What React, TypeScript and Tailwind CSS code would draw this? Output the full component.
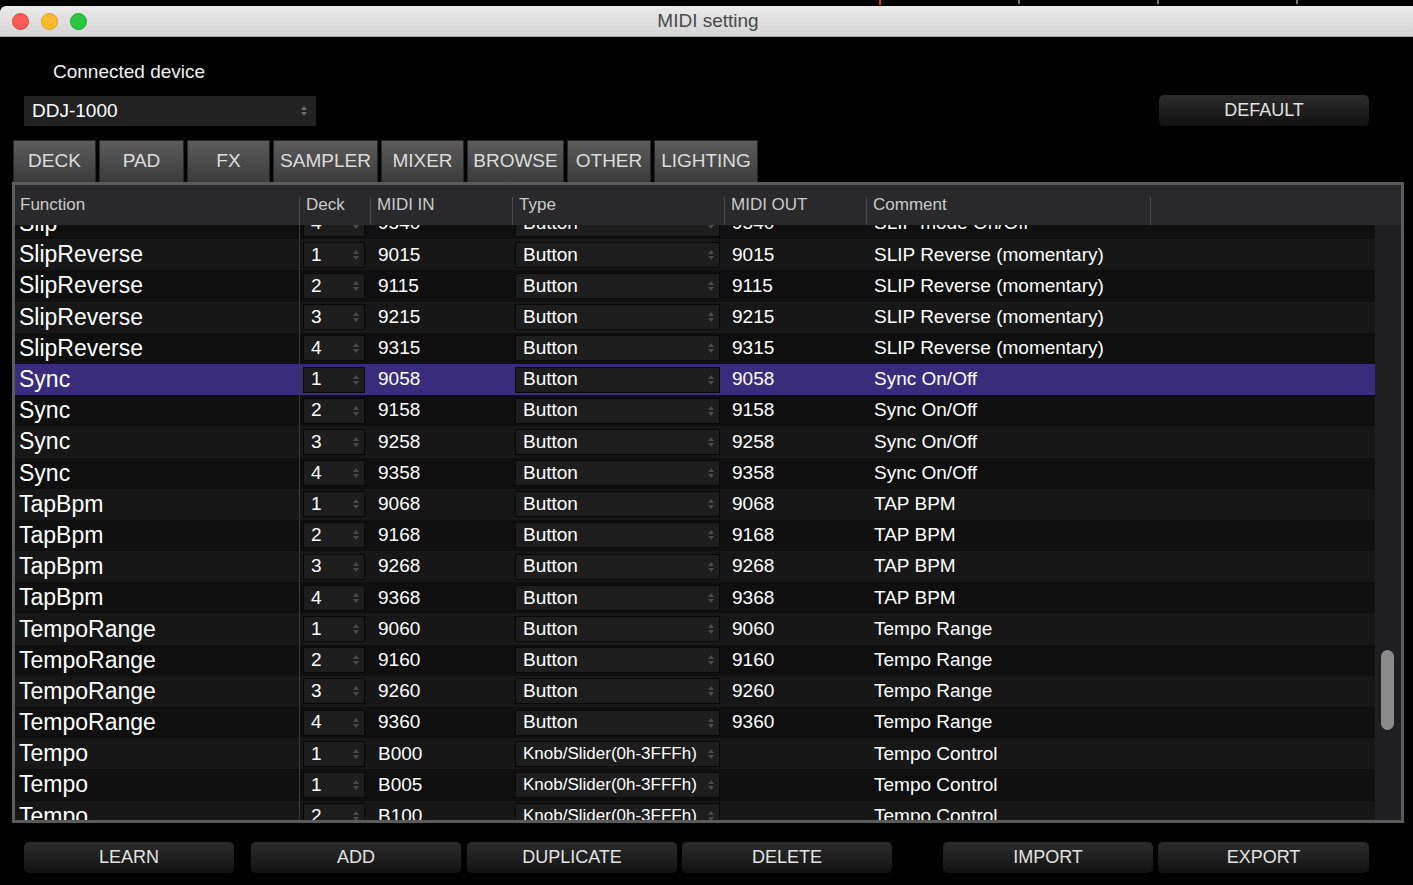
import React from "react";

type Row = {
  fn: string;
  deck: string;
  midiIn: string;
  type: string;
  midiOut: string;
  comment: string;
};

const rows: Row[] = [
  { fn: "Slip", deck: "4", midiIn: "9540", type: "Button", midiOut: "9540", comment: "SLIP mode On/Off" },
  { fn: "SlipReverse", deck: "1", midiIn: "9015", type: "Button", midiOut: "9015", comment: "SLIP Reverse (momentary)" },
  { fn: "SlipReverse", deck: "2", midiIn: "9115", type: "Button", midiOut: "9115", comment: "SLIP Reverse (momentary)" },
  { fn: "SlipReverse", deck: "3", midiIn: "9215", type: "Button", midiOut: "9215", comment: "SLIP Reverse (momentary)" },
  { fn: "SlipReverse", deck: "4", midiIn: "9315", type: "Button", midiOut: "9315", comment: "SLIP Reverse (momentary)" },
  { fn: "Sync", deck: "1", midiIn: "9058", type: "Button", midiOut: "9058", comment: "Sync On/Off" },
  { fn: "Sync", deck: "2", midiIn: "9158", type: "Button", midiOut: "9158", comment: "Sync On/Off" },
  { fn: "Sync", deck: "3", midiIn: "9258", type: "Button", midiOut: "9258", comment: "Sync On/Off" },
  { fn: "Sync", deck: "4", midiIn: "9358", type: "Button", midiOut: "9358", comment: "Sync On/Off" },
  { fn: "TapBpm", deck: "1", midiIn: "9068", type: "Button", midiOut: "9068", comment: "TAP BPM" },
  { fn: "TapBpm", deck: "2", midiIn: "9168", type: "Button", midiOut: "9168", comment: "TAP BPM" },
  { fn: "TapBpm", deck: "3", midiIn: "9268", type: "Button", midiOut: "9268", comment: "TAP BPM" },
  { fn: "TapBpm", deck: "4", midiIn: "9368", type: "Button", midiOut: "9368", comment: "TAP BPM" },
  { fn: "TempoRange", deck: "1", midiIn: "9060", type: "Button", midiOut: "9060", comment: "Tempo Range" },
  { fn: "TempoRange", deck: "2", midiIn: "9160", type: "Button", midiOut: "9160", comment: "Tempo Range" },
  { fn: "TempoRange", deck: "3", midiIn: "9260", type: "Button", midiOut: "9260", comment: "Tempo Range" },
  { fn: "TempoRange", deck: "4", midiIn: "9360", type: "Button", midiOut: "9360", comment: "Tempo Range" },
  { fn: "Tempo", deck: "1", midiIn: "B000", type: "Knob/Slider(0h-3FFFh)", midiOut: "", comment: "Tempo Control" },
  { fn: "Tempo", deck: "1", midiIn: "B005", type: "Knob/Slider(0h-3FFFh)", midiOut: "", comment: "Tempo Control" },
  { fn: "Tempo", deck: "2", midiIn: "B100", type: "Knob/Slider(0h-3FFFh)", midiOut: "", comment: "Tempo Control" },
];

const tabs = [
  { label: "DECK", w: "w-[83px]" },
  { label: "PAD", w: "w-[85px]" },
  { label: "FX", w: "w-[83px]" },
  { label: "SAMPLER", w: "w-[105px]" },
  { label: "MIXER", w: "w-[83px]" },
  { label: "BROWSE", w: "w-[97px]" },
  { label: "OTHER", w: "w-[84px]" },
  { label: "LIGHTING", w: "w-[104px]" },
];

const UpDown = ({ color = "#4a4a4a" }: { color?: string }) => (
  <svg width="8" height="14" viewBox="0 0 8 14">
    <path d="M1 6 L4 2 L7 6 Z" fill={color} />
    <path d="M1 8 L4 12 L7 8 Z" fill={color} />
  </svg>
);

const DarkButton = ({ label, className }: { label: string; className: string }) => (
  <div
    className={`${className} h-[31px] flex items-center justify-center rounded-[5px] bg-gradient-to-b from-[#2c2c2c] to-[#121212] text-[18px] text-[#e2e2e2]`}
  >
    {label}
  </div>
);

const HeaderCell = ({ label, w, sep = true }: { label: string; w: string; sep?: boolean }) => (
  <div className={`${w} h-full flex`}>
    {sep && <div className="w-px h-[28px] self-end bg-[#4c4c4f]" />}
    <span className={`self-center ${sep ? "pl-[6px]" : "pl-[5px]"} -mt-[1px]`}>{label}</span>
  </div>
);

const TableRow = ({ row, idx }: { row: Row; idx: number }) => {
  const selected = row.fn === "Sync" && row.deck === "1";
  const bg = selected ? "bg-[#3a2c7c]" : idx % 2 === 0 ? "bg-[#0f0f0f]" : "bg-[#171717]";
  const knob = row.type !== "Button";
  return (
    <div className={`h-[31.2px] flex items-center text-white ${bg}`}>
      <div className="w-[284px] pl-[4px] text-[23px] leading-none whitespace-nowrap">{row.fn}</div>
      <div className="w-px h-full bg-[#3a3a3a]" />
      <div className="w-[70px] flex">
        <div className="ml-[3px] w-[62px] h-[26px] flex items-center justify-between pl-[7px] pr-[4px] bg-[#1d1d1d] border border-[#080808] text-[19px]">
          <span>{row.deck}</span>
          <UpDown />
        </div>
      </div>
      <div className="w-[142px] pl-[8px] text-[19px]">{row.midiIn}</div>
      <div className="w-[212px] flex">
        <div className="ml-[3px] w-[205px] h-[26px] flex items-center justify-between pl-[7px] pr-[4px] bg-[#1d1d1d] border border-[#080808] whitespace-nowrap">
          <span className={knob ? "text-[17px]" : "text-[19px]"}>{row.type}</span>
          <UpDown />
        </div>
      </div>
      <div className="w-[142px] pl-[8px] text-[19px]">{row.midiOut}</div>
      <div className="flex-1 pl-[8px] text-[19px] whitespace-nowrap">{row.comment}</div>
    </div>
  );
};

export default function App() {
  return (
    <div className="w-[1413px] h-[885px] bg-black overflow-hidden font-['Liberation_Sans',Arial,sans-serif] select-none">
      {/* top strip */}
      <div className="h-[6px] bg-black relative">
        <div className="absolute left-[1018px] top-0 w-[2px] h-[4px] bg-[#777]" />
        <div className="absolute left-[1157px] top-0 w-[2px] h-[4px] bg-[#777]" />
        <div className="absolute left-[1296px] top-0 w-[2px] h-[4px] bg-[#777]" />
        <div className="absolute left-[879px] top-0 w-[2px] h-[5px] bg-[#c33]" />
      </div>

      {/* title bar */}
      <div className="h-[31px] rounded-tl-[6px] bg-gradient-to-b from-[#ebebeb] to-[#d5d5d5] border-b border-[#a9a9a9] flex items-center relative">
        <div className="flex items-center gap-[12px] pl-[12px]">
          <div className="w-[17px] h-[17px] rounded-full bg-[#fd5b55] border border-[#e0443e]" />
          <div className="w-[17px] h-[17px] rounded-full bg-[#fdbb2d] border border-[#dea123]" />
          <div className="w-[17px] h-[17px] rounded-full bg-[#27c840] border border-[#1aab2c]" />
        </div>
        <div className="absolute inset-0 flex items-center justify-center text-[19px] text-[#4a4a4a] pl-[3px]">
          MIDI setting
        </div>
      </div>

      {/* connected device */}
      <div className="pl-[53px] pt-[24px] text-[19px] leading-[22px] text-[#f2f2f2]">Connected device</div>

      <div className="mt-[12px] flex items-start justify-between">
        <div className="ml-[24px] mt-[1px] w-[292px] h-[30px] bg-[#222222] flex items-center justify-between pl-[8px] pr-[8px] text-[19px] text-white">
          <span>DDJ-1000</span>
          <UpDown color="#6a6a6a" />
        </div>
        <DarkButton label="DEFAULT" className="mr-[44px] w-[210px]" />
      </div>

      {/* tabs */}
      <div className="mt-[14px] pl-[13px] flex gap-[3px] h-[42px]">
        {tabs.map((t) => (
          <div
            key={t.label}
            className={`${t.w} h-full flex items-center justify-center bg-gradient-to-b from-[#5c5c5c] to-[#3b3b3b] border border-[#262626] border-b-0 text-[19px] text-[#dcdcdc]`}
          >
            {t.label}
          </div>
        ))}
      </div>

      {/* table panel */}
      <div className="ml-[12px] w-[1392px] h-[641px] border-[3px] border-[#5b5b5b] bg-[#202022] flex flex-col">
        <div className="h-[40px] bg-[#29292c] flex text-[17px] text-[#c9c9c9] shrink-0">
          <HeaderCell label="Function" w="w-[284px]" sep={false} />
          <HeaderCell label="Deck" w="w-[71px]" />
          <HeaderCell label="MIDI IN" w="w-[142px]" />
          <HeaderCell label="Type" w="w-[212px]" />
          <HeaderCell label="MIDI OUT" w="w-[142px]" />
          <HeaderCell label="Comment" w="w-[284px]" />
          <HeaderCell label="" w="flex-1" />
        </div>
        <div className="flex h-[595px]">
          <div className="w-[1360px] h-full overflow-hidden">
            <div className="-mt-[17px]">
              {rows.map((r, i) => (
                <TableRow key={i} row={r} idx={i} />
              ))}
            </div>
          </div>
          <div className="flex-1 h-full bg-[#1f1f21]">
            <div className="ml-[6px] mt-[425px] w-[13px] h-[80px] rounded-full bg-[#8b8b8b]" />
          </div>
        </div>
      </div>

      {/* bottom buttons */}
      <div className="mt-[19px] flex">
        <DarkButton label="LEARN" className="ml-[24px] w-[210px]" />
        <DarkButton label="ADD" className="ml-[17px] w-[210px]" />
        <DarkButton label="DUPLICATE" className="ml-[6px] w-[210px]" />
        <DarkButton label="DELETE" className="ml-[5px] w-[210px]" />
        <DarkButton label="IMPORT" className="ml-[51px] w-[210px]" />
        <DarkButton label="EXPORT" className="ml-[5px] w-[211px]" />
      </div>
    </div>
  );
}
